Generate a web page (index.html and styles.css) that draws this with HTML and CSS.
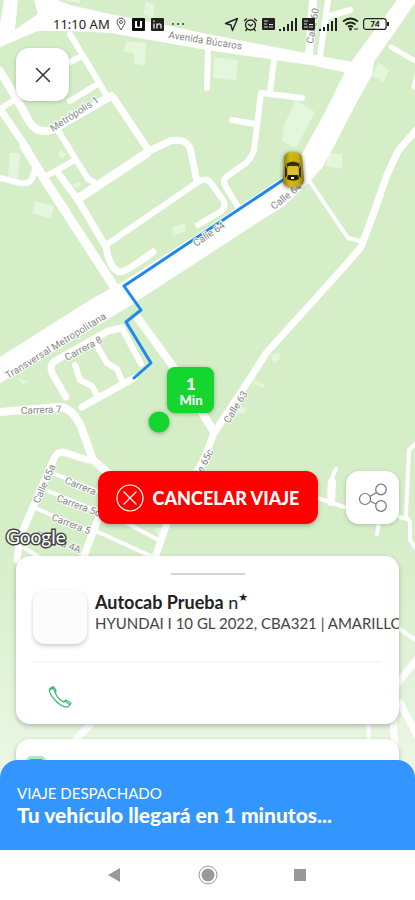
FILE: index.html
```html
<!DOCTYPE html>
<html lang="es">
<head>
    <meta charset="UTF-8">
    <meta name="viewport" content="width=device-width, initial-scale=1.0">
    <title>Viaje despachado</title>
    <link rel="stylesheet" href="styles.css">
</head>
<body>
    <div class="screen">
        <!-- Mapa -->
        <svg class="map" viewBox="0 0 415 900" preserveAspectRatio="xMidYMin slice" role="img" aria-label="Mapa del viaje">
            <defs>
                <linearGradient id="fade" x1="0" y1="0" x2="0" y2="1">
                    <stop offset="0" stop-color="#fff" stop-opacity="0"/>
                    <stop offset="1" stop-color="#fff" stop-opacity="0.5"/>
                </linearGradient>
                <linearGradient id="carBody" x1="0" y1="0" x2="1" y2="0">
                    <stop offset="0" stop-color="#8f7c08"/>
                    <stop offset="0.35" stop-color="#d3b913"/>
                    <stop offset="0.7" stop-color="#c8ae10"/>
                    <stop offset="1" stop-color="#857307"/>
                </linearGradient>
                <path id="avenida" d="M168 38 L250 51"/>
                <path id="transversal" d="M8 379 L120 310"/>
            </defs>
            <rect width="415" height="900" fill="#d5eec8"/>

            <!-- Edificios -->
            <g class="buildings">
                <path d="M126 41l20 2-1 23-11-2 0-10-10-3z"/>
                <path d="M146 2l9 3-2 13-10-4z"/>
                <path d="M214 57l24 3-2 20-23-2z"/>
                <path d="M296 100l19 12-19 36-14-7 2-16z"/>
                <path d="M378 62l11 8-5 12-12-6z"/>
                <path d="M329 153l13 1 0 15-16-3z"/>
                <path d="M10 153l10 0-2 26-10-2z"/>
                <path d="M35 201l19 5-3 13-19-6z"/>
                <path d="M172 228l12-5 2 8-13 5z"/>
                <path d="M73 184l7-2 1 4-6 2z"/>
                <path d="M60 150l6 4-4 5-4-4z"/>
                <path d="M270 355l9-3 1 7-6 4z"/>
                <path d="M255 380l10 5-1 3-11-5z"/>
                <path d="M240 407l6 1-2 6-6-2z"/>
                <path d="M17 378l12 4-6 2z"/>
                <path d="M155 529l7-2 1 6-6 2z"/>
                <path d="M62 0h18v3z"/>
            </g>

            <!-- Avenidas -->
            <g fill="#fff">
                <path d="M34 0H57L70 5 110 14 170 26 207 34 352 62 348 73 310 65 207 50 110 33 70 31 38 31 0 47V34L16 29 38 14Z"/>
                <path d="M4 0H18L15 29 0 40V24Z"/>
                <path d="M397 0H417L374 62 372 75 359 98 332 150 322 168 307 184 284 206 257 223 208 255 125 309 0 383V357L90 300 124 281 207 228 284 176 302 154 325 112 348 66Z"/>
            </g>

            <!-- Calles -->
            <g class="streets">
                <path class="w6" d="M70 34L107 96M70 62L82 56M70 101L98 84"/>
                <path class="w8" d="M111 96L52 130Q38 134 30 123L16 98 0 71"/>
                <path class="w6" d="M0 109L16 99M59 132L70 150 88 179 94 182"/>
                <path class="w7" d="M113 97L147 148M0 109L28 150"/>
                <path class="w9" d="M24 146L43 177 115 288"/>
                <path class="w6" d="M0 178L20 183Q32 185 33 175L36 166M48 175L75 160"/>
                <path class="w7" d="M58 173L78 200 106 247Q110 270 120 272 126 272 153 252"/>
                <path class="w9" d="M79 198L147 153"/>
                <path class="w7" d="M147 152L170 141Q188 137 191 152L197 182"/>
                <path class="w6" d="M106 245L198 182Q206 177 211 183L223 200Q227 207 220 212L198 225"/>
                <path class="w6" d="M261 93L254 150Q252 157 246 163L226 177Q222 181 226 187L238 207"/>
                <path class="w6" d="M274 60L270 92M262 93L302 98M232 120L255 124M208 48L207 88"/>
                <path class="w8" d="M313 0L309 56"/>
                <path class="w6" d="M328 0L320 56M350 10L326 17"/>
                <path class="w5" d="M391 47L417 62M418 72L414 87"/>
                <path class="w7" d="M417 129L398 151 387 175 373 215 361 247 350 260 316 298 267 352 247 383 214 433 205 457 190 485 167 523 155 558"/>
                <path class="w4" d="M310 182L348 238 360 241"/>
                <path class="w8" d="M137 317L172 365 213 430"/>
                <path class="w7" d="M122 328L108 331 55 361Q49 365 52 373L66 397M82 407L134 378"/>
                <path class="w6" d="M122 328L141 364M97 346L107 363 117 369 123 383M75 365L80 380 92 386 98 397"/>
                <path class="w8" d="M0 412L58 407Q70 406 80 424L93 460 107 472"/>
                <path class="w7" d="M88 460L63 452Q56 452 53 461L33 507 20 537 17 560"/>
                <path class="w4" d="M55 474L104 494M48 491L100 512M35 508L92 532M98 532L155 558M125 522L160 541M25 548L40 558"/>
                <path class="w7" d="M100 514L84 556"/>
                <path class="w8" d="M332 482L331 502"/>
                <path class="w4" d="M336 469L333 475 331 486M318 498L347 508M379 522L377 534"/>
                <path class="w4" d="M417 442L409 450 406 516 410 522 410 540 417 550M400 517L407 519"/>
                <path class="w4" d="M398 628L417 641M368 722L369 737"/>
                <path class="w7" d="M396 685L417 659M400 703L417 735M90 725L77 738M393 720L396 760"/>
            </g>
            <rect y="540" width="415" height="220" fill="url(#fade)"/>
            <rect y="760" width="415" height="140" fill="#fff" fill-opacity="0.5"/>

            <!-- Ruta -->
            <path class="route" d="M292 174L124 286 141 310 126 322 151 363 134 378"/>

            <!-- Nombres de calles -->
            <g class="labels">
                <text><textPath href="#avenida">Avenida Búcaros</textPath></text>
                <text><textPath href="#transversal">Transversal Metropolitana</textPath></text>
                <text transform="translate(53 132) rotate(-33)">Metrópolis 1</text>
                <text transform="translate(313 44) rotate(-80)">Calle 60</text>
                <text transform="translate(196 247) rotate(-34)">Calle 64</text>
                <text transform="translate(274 210) rotate(-38)">Calle 64</text>
                <text transform="translate(67 361) rotate(-28)">Carrera 8</text>
                <text transform="translate(21 414) rotate(-2)">Carrera 7</text>
                <text transform="translate(229 424) rotate(-58)">Calle 63</text>
                <text transform="translate(195 488) rotate(-63)">Calle 65c</text>
                <text transform="translate(39 504) rotate(-66)">Calle 65a</text>
                <text transform="translate(64 483) rotate(22)">Carrera 6</text>
                <text transform="translate(56 501) rotate(20)">Carrera 5c</text>
                <text transform="translate(51 520) rotate(21)">Carrera 5</text>
                <text transform="translate(35 537) rotate(20)">Carrera 4A</text>
            </g>
            <text class="google" x="6" y="544">Google</text>

            <!-- Vehículo -->
            <g class="car">
                <path d="M284 158Q284 152 293 152T302 158L303 168 304 180Q304 187 293 187T283 180L284 168Z" fill="url(#carBody)"/>
                <path d="M286 164Q293 159 300 164L298 168H288Z" fill="#383005"/>
                <rect x="288" y="166" width="10" height="9" rx="1" fill="#dbc02b"/>
                <path d="M288 175H298L299 179Q293 182 287 179Z" fill="#201c08"/>
                <path d="M285 165L287 169V176L285 178ZM301 165L299 169V176L301 178Z" fill="#332b05"/>
                <path d="M291 177h3v2h-3z" fill="#f5f0d0"/>
            </g>

            <!-- Punto de recogida -->
            <circle class="pin" cx="159" cy="422" r="10.5"/>
            <rect class="pin" x="167" y="367" width="47" height="46" rx="8"/>
            <g class="pin-text">
                <text x="191" y="390" font-size="17">1</text>
                <text x="191" y="405" font-size="13">Min</text>
            </g>
        </svg>

        <div class="ui">
            <div class="status">
                <div class="group left">
                    <span class="time">11:10 AM</span>
                    <svg width="10" height="14" viewBox="0 0 10 14"><path d="M5 13L1.5 7A4 4 0 1 1 8.5 7Z" fill="none" stroke="#555"/><circle cx="5" cy="5" r="1.5" fill="none" stroke="#555"/></svg>
                    <svg width="13" height="13" viewBox="0 0 13 13"><rect width="13" height="13" rx="1" fill="#111"/><path d="M3 3H5V7Q5 9 6.500 9T8 7V3H10V10H3Z" fill="#fff"/></svg>
                    <svg width="13" height="13" viewBox="0 0 13 13"><rect width="13" height="13" rx="1" fill="#222"/><path d="M3 5.500V10.500M3 2.500V4M6 10.500V5.500M6 7.500Q8 4.500 10 7V10.500" fill="none" stroke="#ddd" stroke-width="1.4"/></svg>
                    <svg width="16" height="13" viewBox="0 0 16 13" fill="#333"><circle cx="3" cy="6" r="1"/><circle cx="8" cy="6" r="1"/><circle cx="13" cy="6" r="1"/></svg>
                </div>
                <div class="group">
                    <svg width="15" height="15" viewBox="0 0 15 15"><path d="M1.5 6.5L13.5 1.5 8.5 13.5 7 8Z" fill="none" stroke="#222" stroke-width="1.4" stroke-linejoin="round"/></svg>
                    <svg width="15" height="15" viewBox="0 0 15 15" fill="none" stroke="#222" stroke-width="1.3"><circle cx="7.5" cy="8" r="5"/><path d="M5 7L7.5 9 10 7M1 4L4 1.5M14 4L11 1.5M4 12L2.5 14M11 12L12.5 14"/></svg>
                    <svg width="13" height="12" viewBox="0 0 13 12"><rect width="13" height="12" rx="1" fill="#222"/><path d="M2 3H6M2 6H5M2 9H6M7 6.500H11M7 9H11" stroke="#ddd" stroke-width="1.2"/></svg>
                    <svg width="19" height="13" viewBox="0 0 19 13" fill="#222"><path d="M0 11h2v2H0zM4 9h2v4H4zM8 6h2v7H8zM12 3h2v10h-2zM16 0h2v13h-2z"/></svg>
                    <svg width="13" height="12" viewBox="0 0 13 12"><rect width="13" height="12" rx="1" fill="#222"/><path d="M2 3H6M2 6H5M2 9H6M7 6.500H11M7 9H11" stroke="#ddd" stroke-width="1.2"/></svg>
                    <svg width="19" height="13" viewBox="0 0 19 13" fill="#222"><path d="M0 11h2v2H0zM4 9h2v4H4zM8 6h2v7H8zM12 3h2v10h-2zM16 0h2v13h-2z"/></svg>
                    <svg width="17" height="14" viewBox="0 0 17 14" fill="none" stroke="#222" stroke-width="1.8"><path d="M1 4.500Q8.500-1.500 16 4.500M3.500 7.500Q8.500 3.500 13.500 7.500M6 10Q8.500 8 11 10"/><circle cx="8.5" cy="12" r="0.6"/><path d="M12 12h4" stroke="#777"/></svg>
                    <svg width="26" height="12" viewBox="0 0 26 12"><rect x="0.6" y="0.6" width="22.5" height="10.8" rx="2.5" fill="none" stroke="#222" stroke-width="1.2"/><path d="M24 4h2v4h-2z" fill="#222"/><text x="12" y="9" class="battery">74</text></svg>
                </div>
            </div>

            <button class="square" type="button" aria-label="Cerrar">
                <svg width="16" height="16" viewBox="0 0 16 16"><path d="M1.5 1.5L14.5 14.5M14.5 1.5L1.5 14.5" stroke="#2f343c" stroke-width="1.5" stroke-linecap="round"/></svg>
            </button>

            <div class="actions">
                <button class="cancel" type="button">
                    <svg width="28" height="28" viewBox="0 0 28 28" fill="none" stroke="#fff" stroke-width="1.2"><circle cx="14" cy="14" r="13"/><path d="M7.5 7.5L20.5 20.5M20.5 7.5L7.5 20.5"/></svg>
                    CANCELAR VIAJE
                </button>
                <button class="square share" type="button" aria-label="Compartir">
                    <svg width="30" height="30" viewBox="0 0 30 30" fill="none" stroke="#777" stroke-width="1.2"><circle cx="7" cy="16" r="5.5"/><circle cx="23" cy="6.5" r="5.3"/><circle cx="23" cy="23" r="5.3"/><path d="M12 13.5L18.5 9.5M12 18L18 21"/></svg>
                </button>
            </div>

            <div class="card">
                <div class="handle"></div>
                <div class="driver">
                    <div class="avatar"></div>
                    <div class="info">
                        <p class="name"><b>Autocab Prueba</b> n<sup>★</sup></p>
                        <p class="detail">HYUNDAI I 10 GL 2022, CBA321 | AMARILLO</p>
                    </div>
                </div>
                <button class="call" type="button" aria-label="Llamar">
                    <svg width="24" height="24" viewBox="0 0 24 24"><path d="M5 1.500L1.500 4C0 9 12 23 20 22L23 18.500C22 16.500 20 15.500 18 15L15.500 17C12 15 9 12 7.500 8.500L8 6C7.500 4 6.500 2.500 5 1.500ZM2 5L5 3 7.500 8M15.500 17L18 16.500 21.500 19.500" fill="none" stroke="#3fba72" stroke-width="1.2" stroke-linejoin="round"/></svg>
                </button>
            </div>

            <div class="card next">
                <div class="badge"></div>
            </div>

            <div class="sheet">
                <p class="state">VIAJE DESPACHADO</p>
                <p class="eta">Tu vehículo llegará en 1 minutos...</p>
            </div>

            <nav class="nav">
                <button type="button" aria-label="Atrás"><svg width="20" height="20" viewBox="0 0 20 20"><path d="M2 10L14 3V17Z" fill="#999"/></svg></button>
                <button type="button" aria-label="Inicio"><svg width="20" height="20" viewBox="0 0 20 20"><circle cx="10" cy="10" r="9" fill="none" stroke="#999"/><circle cx="10" cy="10" r="6.5" fill="#999"/></svg></button>
                <button type="button" aria-label="Recientes"><svg width="20" height="20" viewBox="0 0 20 20"><path d="M4 4H16V16H4Z" fill="#999"/></svg></button>
            </nav>
        </div>
    </div>
</body>
</html>
```
FILE: styles.css
```css
* {
    box-sizing: border-box;
}

body {
    margin: 0;
    font-family: Lato, "Open Sans", sans-serif;
    color: #222;
}

p {
    margin: 0;
}

svg {
    display: block;
    flex: none;
}

button {
    border: none;
    padding: 0;
    background: none;
    font-family: inherit;
    cursor: pointer;
}

.screen {
    display: grid;
    grid-template-rows: minmax(0, 1fr);
    grid-template-columns: minmax(0, 1fr);
    height: 100vh;
    min-height: 640px;
}

.map,
.ui {
    grid-area: 1 / 1;
}

.map {
    width: 100%;
    height: 100%;
}

/* Mapa */
.buildings {
    fill: #e4f6dc;
}

.streets {
    fill: none;
    stroke: #fff;
    stroke-linecap: round;
    stroke-linejoin: round;
}

.w4 { stroke-width: 4px; }
.w5 { stroke-width: 5px; }
.w6 { stroke-width: 6px; }
.w7 { stroke-width: 7px; }
.w8 { stroke-width: 8px; }
.w9 { stroke-width: 9px; }

.route {
    fill: none;
    stroke: #1e88ee;
    stroke-width: 3px;
    stroke-linecap: round;
    stroke-linejoin: round;
}

.labels {
    font-family: Roboto, sans-serif;
    font-size: 10px;
    fill: #858585;
    stroke: #fff;
    stroke-width: 2px;
    paint-order: stroke;
}

.google {
    font-family: Lato, sans-serif;
    font-size: 19px;
    fill: #fff;
    stroke: #444;
    stroke-width: 3px;
    paint-order: stroke;
}

.car {
    filter: drop-shadow(0 1px 2px rgba(0, 0, 0, 0.6));
}

.pin {
    fill: #14d62f;
    filter: drop-shadow(0 1px 2px rgba(0, 0, 0, 0.3));
}

.pin-text {
    fill: #fff;
    font-weight: 900;
    text-anchor: middle;
}

/* Interfaz */
.ui {
    display: flex;
    flex-direction: column;
    z-index: 1;
}

.status {
    display: flex;
    align-items: center;
    justify-content: space-between;
    height: 48px;
    padding: 0 26px 0 53px;
}

.group {
    display: flex;
    align-items: center;
    gap: 4px;
}

.left {
    gap: 6px;
}

.time {
    font-family: "Noto Sans", sans-serif;
    font-size: 13px;
}

.battery {
    font-size: 8px;
    font-weight: bold;
    text-anchor: middle;
}

.square {
    display: flex;
    align-items: center;
    justify-content: center;
    width: 53px;
    height: 53px;
    margin-left: 16px;
    border-radius: 13px;
    background: #fff;
    box-shadow: 0 1px 4px rgba(0, 0, 0, 0.2);
}

.actions {
    display: grid;
    grid-template-columns: 1fr auto 1fr;
    margin: auto 16px 32px;
}

.cancel {
    grid-column: 2;
    display: flex;
    align-items: center;
    justify-content: center;
    gap: 9px;
    width: 220px;
    height: 53px;
    border-radius: 12px;
    background: #fe0000;
    color: #fff;
    font-size: 18px;
    font-weight: 900;
    box-shadow: 0 2px 4px rgba(0, 0, 0, 0.25);
}

.share {
    margin-left: auto;
}

.card {
    flex: none;
    height: 168px;
    margin: 0 16px 15px;
    padding-top: 17px;
    border-radius: 14px;
    background: #fff;
    box-shadow: 0 2px 5px rgba(0, 0, 0, 0.25);
    overflow: hidden;
}

.handle {
    width: 74px;
    height: 2px;
    margin: 0 auto 15px;
    background: #d5d5d5;
}

.driver {
    display: flex;
    gap: 8px;
    height: 71px;
    margin-left: 17px;
}

.avatar {
    flex: none;
    width: 54px;
    height: 54px;
    border-radius: 12px;
    background: #fcfcfc;
    box-shadow: 0 2px 4px rgba(0, 0, 0, 0.2);
}

.info {
    min-width: 0;
    white-space: nowrap;
    overflow: hidden;
}

.name {
    font-size: 18px;
    line-height: 24px;
}

.name sup {
    font-family: "DejaVu Sans", sans-serif;
    font-size: 11px;
    line-height: 0;
    vertical-align: 8px;
}

.detail {
    font-size: 15px;
    line-height: 18px;
    color: #444;
}

.call {
    display: block;
    width: calc(100% - 36px);
    margin: 0 18px;
    padding: 22px 14px;
    border-top: 2px solid #f7f7f7;
}

.next {
    height: 41px;
    margin-bottom: 0;
}

.badge {
    width: 20px;
    height: 20px;
    margin-left: 10px;
    border: 3px solid #a9eac0;
    border-radius: 5px;
    background: #2fbd62;
}

.sheet {
    flex: none;
    height: 90px;
    margin-top: -20px;
    padding: 23px 17px;
    border-radius: 18px 18px 0 0;
    background: #3296fe;
    color: #fff;
    z-index: 1;
}

.state {
    font-size: 15px;
    line-height: 20px;
}

.eta {
    font-size: 21px;
    line-height: 24px;
    font-weight: 900;
}

.nav {
    flex: none;
    display: flex;
    justify-content: center;
    align-items: center;
    gap: 72px;
    height: 50px;
    background: #fff;
}
```
